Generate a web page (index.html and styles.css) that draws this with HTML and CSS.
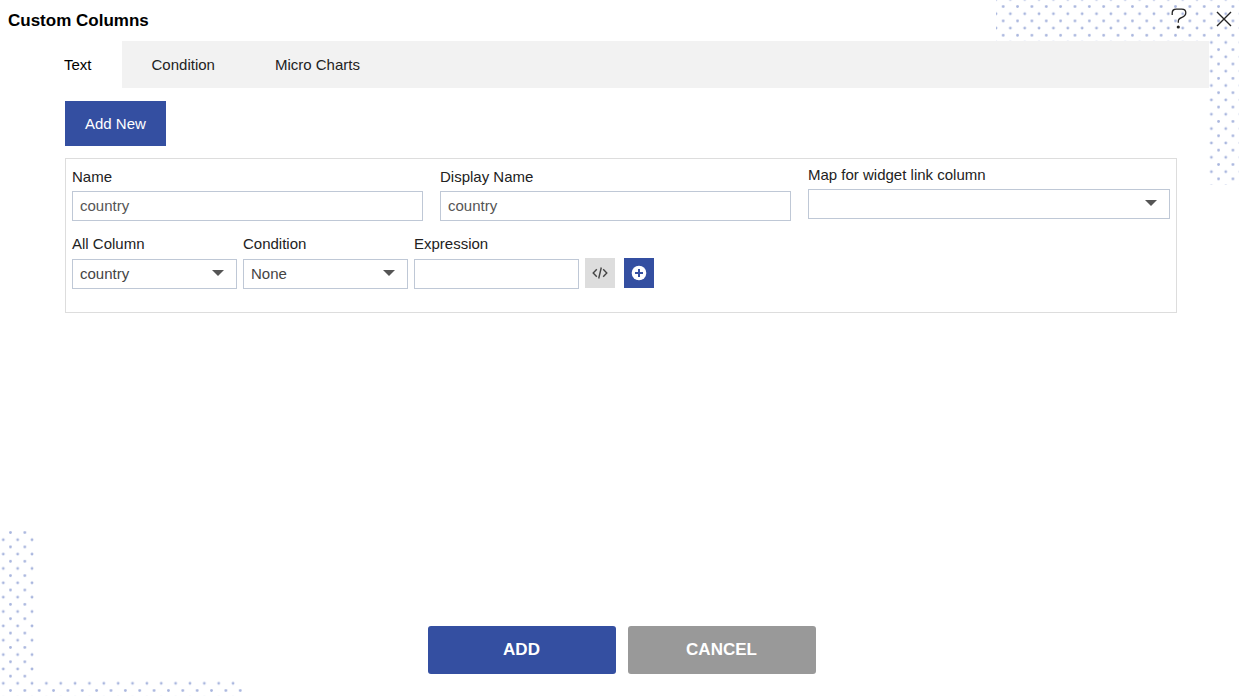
FILE: index.html
```
<!DOCTYPE html>
<html lang="en">
<head>
  <meta charset="UTF-8" />
  <meta name="viewport" content="width=device-width, initial-scale=1.0"/>
  <title>Custom Columns</title>
  <link rel="stylesheet" href="styles.css">
</head>
<body>
  <svg class="dots dots-top" viewBox="0 0 243 185" aria-hidden="true">
    <defs>
      <pattern id="dots-a" x="0" y="-0.6" width="14.36" height="14.36" patternUnits="userSpaceOnUse">
        <circle cx="7.18" cy="7.18" r="1.4"/>
        <circle cx="0" cy="0" r="1.4"/><circle cx="14.36" cy="0" r="1.4"/>
        <circle cx="0" cy="14.36" r="1.4"/><circle cx="14.36" cy="14.36" r="1.4"/>
      </pattern>
    </defs>
    <rect width="243" height="185" fill="url(#dots-a)"/>
  </svg>
  <svg class="dots dots-bottom" viewBox="0 0 245 166" aria-hidden="true">
    <defs>
      <pattern id="dots-b" x="3.3" y="-4.6" width="14.36" height="14.36" patternUnits="userSpaceOnUse">
        <circle cx="7.18" cy="7.18" r="1.4"/>
        <circle cx="0" cy="0" r="1.4"/><circle cx="14.36" cy="0" r="1.4"/>
        <circle cx="0" cy="14.36" r="1.4"/><circle cx="14.36" cy="14.36" r="1.4"/>
      </pattern>
    </defs>
    <rect width="245" height="166" fill="url(#dots-b)"/>
  </svg>

  <header class="header">
    <h1>Custom Columns</h1>
    <div class="header-actions">
      <button type="button" class="icon-btn" aria-label="Help">
        <svg width="16" height="22" viewBox="0 0 16 22" fill="none" stroke="#222" stroke-width="1.3">
          <path d="M1.2 7V5C1.2 2.6 2.8 1.2 5.2 1.2h5.6c2.400 0 4 1.500 4 3.600c0 2.500-1.600 3.700-3.800 4.500C8.400 10.200 7.300 11.200 7.300 13.200v1.600"/>
          <circle cx="7.3" cy="19" r="1.6" fill="#222" stroke="none"/>
        </svg>
      </button>
      <button type="button" class="icon-btn" aria-label="Close">
        <svg width="16" height="16" viewBox="0 0 16 16" fill="none" stroke="#222" stroke-width="1.4">
          <path d="M1 1l14 14M15 1L1 15"/>
        </svg>
      </button>
    </div>
  </header>

  <main class="main">
    <nav class="tabs">
      <button type="button" class="tab active">Text</button>
      <button type="button" class="tab">Condition</button>
      <button type="button" class="tab">Micro Charts</button>
    </nav>

    <div class="content">
      <button type="button" class="add-new">Add New</button>

      <div class="panel">
        <div class="row-top">
          <div class="field field-text">
            <label for="name">Name</label>
            <input type="text" id="name" value="country">
          </div>
          <div class="field field-text">
            <label for="display-name">Display Name</label>
            <input type="text" id="display-name" value="country">
          </div>
          <div class="field">
            <label for="map">Map for widget link column</label>
            <div class="select"><select id="map"><option></option></select></div>
          </div>
        </div>

        <div class="row-bottom">
          <div class="field field-small">
            <label for="column">All Column</label>
            <div class="select"><select id="column"><option>country</option></select></div>
          </div>
          <div class="field field-small">
            <label for="condition">Condition</label>
            <div class="select"><select id="condition"><option>None</option></select></div>
          </div>
          <div class="field field-small">
            <label for="expression">Expression</label>
            <input type="text" id="expression">
          </div>
          <div class="row-actions">
            <button type="button" class="square code" aria-label="Edit expression">
              <svg width="16" height="14" viewBox="0 0 16 14" fill="none" stroke="#444" stroke-width="1.4">
                <path d="M4.8 3.2L1.2 7l3.6 3.8M11.2 3.2L14.8 7l-3.6 3.8M9.3 1.5L6.7 12.5"/>
              </svg>
            </button>
            <button type="button" class="square plus" aria-label="Add condition">
              <svg width="16" height="16" viewBox="0 0 16 16">
                <circle cx="8" cy="8" r="7.3" fill="#fff"/>
                <path d="M8 4v8M4 8h8" stroke="#344fa1" stroke-width="2"/>
              </svg>
            </button>
          </div>
        </div>
      </div>
    </div>

    <footer class="footer">
      <button type="button" class="btn btn-add">ADD</button>
      <button type="button" class="btn btn-cancel">CANCEL</button>
    </footer>
  </main>
</body>
</html>
```
FILE: styles.css
```
* { box-sizing: border-box; margin: 0; padding: 0; }
body {
  position: relative;
  display: flex;
  flex-direction: column;
  min-height: 100vh;
  background: #fff;
  color: #222;
  font-family: "Liberation Sans", Arial, sans-serif;
  font-size: 15px;
  line-height: 20px;
}
button, input, select { font: inherit; color: inherit; }
button { border: 0; cursor: pointer; }
svg { display: block; }

/* dotted corners behind the dialog */
.dots { position: absolute; z-index: -1; fill: #a9b6de; }
.dots-top { top: 0; right: 0; width: 243px; height: 185px; }
.dots-bottom { bottom: 0; left: 0; width: 245px; height: 166px; }

.header {
  display: flex;
  justify-content: space-between;
  align-items: center;
  height: 41px;
  padding: 0 7px 0 8px;
}
h1 { font-size: 17px; font-weight: 700; color: #000; }
.header-actions { display: flex; align-items: center; gap: 29px; padding-bottom: 3px; }
.icon-btn { background: transparent; }

.main {
  flex: 1;
  display: flex;
  flex-direction: column;
  margin: 0 30px 16px 34px;
  background: #fff;
}
.tabs { display: flex; background: #f2f2f2; }
.tab { height: 47px; padding: 0 30px; background: transparent; }
.tab.active { background: #fff; color: #000; }

.content { flex: 1; padding: 13px 32px 13px 31px; }
.add-new {
  height: 45px;
  padding: 0 20px;
  background: #344fa1;
  color: #fff;
}
.panel {
  margin-top: 12px;
  padding: 6px 6px 23px;
  border: 1px solid #ddd;
}
.row-top {
  display: grid;
  grid-template-columns: 351fr 351fr 362fr;
  gap: 17px;
  align-items: start;
}
.row-bottom { display: flex; flex-wrap: wrap; gap: 6px; margin-top: 13px; }
.field { display: flex; flex-direction: column; gap: 4px; }
.field-text { padding-top: 2px; }
.field-small { width: 165px; gap: 5px; }
input, select {
  width: 100%;
  height: 30px;
  padding: 0 7px;
  border: 1px solid #bfc8d6;
  border-radius: 0;
  background: #fff;
}
input { padding-bottom: 1px; color: #555; }
select { display: block; appearance: none; color: #444; }
.select { position: relative; }
.select::after {
  content: "";
  position: absolute;
  top: 11px;
  right: 13px;
  border: 6px solid transparent;
  border-top-color: #555;
  border-bottom: 0;
  pointer-events: none;
}
.row-actions { display: flex; align-items: flex-end; gap: 9px; padding-bottom: 1px; }
.square {
  display: flex;
  justify-content: center;
  align-items: center;
  width: 30px;
  height: 30px;
}
.code { background: #ddd; }
.plus { background: #344fa1; }

.footer { display: flex; justify-content: center; gap: 12px; padding-bottom: 6px; }
.btn {
  width: 188px;
  height: 48px;
  border-radius: 3px;
  color: #fff;
  font-size: 17px;
  font-weight: 700;
}
.btn-add { background: #344fa1; }
.btn-cancel { background: #999; }
```
